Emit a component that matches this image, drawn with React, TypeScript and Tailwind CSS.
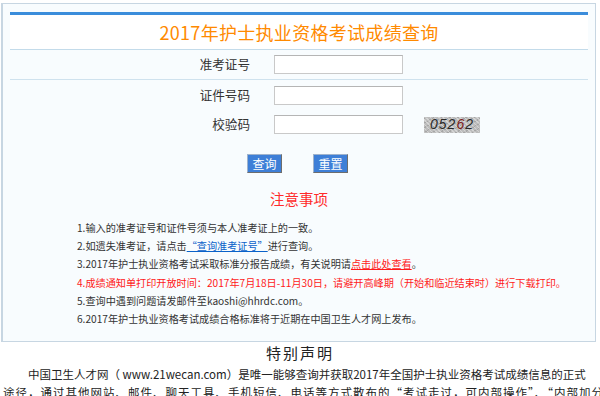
const CJK = { fontFamily: '"Noto Sans CJK SC", "Noto Sans", sans-serif' };

function Field({ label, children, className }: { label: string; children?: React.ReactNode; className: string }) {
  return (
    <div className={`flex items-center ${className}`}>
      <div className="w-[241px] pr-[1px] text-right text-[12.6px] text-[#333]">{label}</div>
      <div className="ml-[23px] h-[19px] w-[129px] border border-[#c9c9c9] border-t-[#b5b5b5] bg-white" />
      {children}
    </div>
  );
}

function Captcha() {
  return (
    <div
      className="ml-[21px] flex h-[16px] w-[56px] items-center justify-center bg-[#bdbdbd] text-[14px] italic tracking-[1px] text-[#2a2a2a]"
      style={{
        fontFamily: '"Liberation Sans", sans-serif',
        backgroundImage:
          'repeating-linear-gradient(45deg, rgba(255,255,255,0.35) 0 1px, transparent 1px 3px), repeating-linear-gradient(-30deg, rgba(0,0,0,0.12) 0 1px, transparent 1px 4px)',
      }}
    >
      052<span className="text-[#7a1b1b]">6</span>2
    </div>
  );
}

function Btn({ children }: { children: string }) {
  return (
    <div className="flex h-[19px] w-[35px] items-center justify-center border border-[#9fb3cc] border-r-[#6d6d6d] border-b-[#6d6d6d] bg-[#3e7fd7] text-[12px] leading-none text-white">
      {children}
    </div>
  );
}

export default function App() {
  return (
    <div className="h-[396px] w-[600px] overflow-hidden bg-white" style={CJK}>
      <div className="ml-[1px] mt-[3px] w-[595px] border border-l-2 border-[#c7d6e2] bg-[#f8fcfe] px-[7px] pt-[8px]">
        <div className="h-[3px] bg-[#3b8ddb]" />
        <div className="flex h-[35px] items-center justify-center border-b border-[#c3dbea] bg-white text-[18px] tracking-[0.3px] text-[#ff8a00]">
          2017年护士执业资格考试成绩查询
        </div>
        <Field label="准考证号" className="h-[30px] border-b border-[#cfe2ee]" />
        <Field label="证件号码" className="h-[30px]" />
        <Field label="校验码" className="h-[29px]">
          <Captcha />
        </Field>
        <div className="mt-[15px] flex justify-center gap-[31px] pr-[3px]">
          <Btn>查询</Btn>
          <Btn>重置</Btn>
        </div>
        <div className="mt-[16px] text-center text-[14.5px] leading-[20px] text-[#ff2b2b]">注意事项</div>
        <div className="mt-[10px] pb-[13px] pl-[67px] text-[10.15px] leading-[18.2px] text-[#333]">
          <div>1.输入的准考证号和证件号须与本人准考证上的一致。</div>
          <div>
            2.如遗失准考证，请点击<span className="text-[#0a62c9] underline">“查询准考证号”</span>进行查询。
          </div>
          <div>
            3.2017年护士执业资格考试采取标准分报告成绩，有关说明请<span className="text-[#ff1a1a] underline">点击此处查看</span>。
          </div>
          <div className="text-[#ff1a1a]">
            4.成绩通知单打印开放时间：2017年7月18日-11月30日，请避开高峰期（开始和临近结束时）进行下载打印。
          </div>
          <div>5.查询中遇到问题请发邮件至kaoshi@hhrdc.com。</div>
          <div>6.2017年护士执业资格考试成绩合格标准将于近期在中国卫生人才网上发布。</div>
        </div>
      </div>
      <div className="mt-[1px] text-center text-[15px] leading-[20px] tracking-[2px] text-[#222]">特别声明</div>
      <div className="mt-[2px] px-[3px] text-[11.5px] leading-[18px] text-[#222]">
        <div className="whitespace-nowrap pl-[25px]">
          中国卫生人才网（ www.21wecan.com）是唯一能够查询并获取2017年全国护士执业资格考试成绩信息的正式
        </div>
        <div className="whitespace-nowrap tracking-[1px]">
          途径，通过其他网站、邮件、聊天工具、手机短信、电话等方式散布的“考试走过，可内部操作”、“内部加分”等信息均为虚假信息。
        </div>
      </div>
    </div>
  );
}
